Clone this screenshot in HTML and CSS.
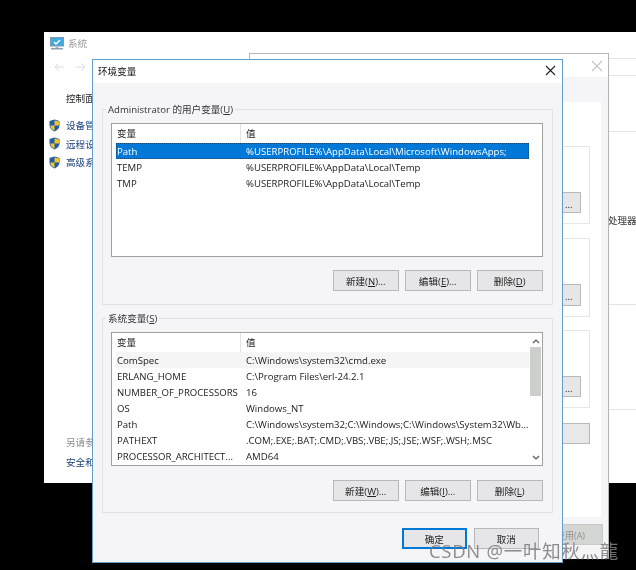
FILE: index.html
```html
<!DOCTYPE html>
<html lang="zh-CN">
<head>
  <meta charset="UTF-8">
  <meta name="viewport" content="width=device-width, initial-scale=1.0">
  <title>环境变量</title>
  <link rel="stylesheet" href="styles.css">
</head>
<body>
  <div class="desktop">

    <!-- 系统 -->
    <div class="win-system">
      <div class="sys-title">
        <svg class="sys-icon" width="14" height="13" viewBox="0 0 14 13">
          <rect x="0.500" y="0.500" width="13" height="8.500" fill="#3fa9e0" stroke="#7d9cb3"/>
          <path d="M4 5l2 2 4-4" fill="none" stroke="#fff" stroke-width="1.500"/>
          <path d="M5.500 9.500h3v1.500h-3z" fill="#a8bac6"/>
          <rect x="1" y="11" width="12" height="1.500" fill="#8aa0b0"/>
        </svg>
        <span>系统</span>
      </div>
      <div class="sys-nav">
        <svg width="10" height="8" viewBox="0 0 10 8"><path d="M10 4H1M4.500 0.500L1 4l3.500 3.500" fill="none" stroke="#dcdcdc"/></svg>
        <svg width="10" height="8" viewBox="0 0 10 8"><path d="M0 4h9M5.500 0.500L9 4 5.500 7.500" fill="none" stroke="#dcdcdc"/></svg>
      </div>
      <div class="sys-side">
        <div class="side-home">控制面</div>
        <ul class="side-list">
          <li><svg class="shield" width="11" height="13" viewBox="0 0 11 13"><path d="M5.500 0.500L10.500 2V6.500C10.500 9.500 8 11.500 5.500 12.500C3 11.500 0.500 9.500 0.500 6.500V2z" fill="#1f5fa8"/><path d="M5.500 1.500V6.500H10V2.500zM5.500 6.500V11.800C3.500 11 1.500 9.300 1.200 6.500z" fill="#f4c430"/></svg>设备管</li>
          <li><svg class="shield" width="11" height="13" viewBox="0 0 11 13"><path d="M5.500 0.500L10.500 2V6.500C10.500 9.500 8 11.500 5.500 12.500C3 11.500 0.500 9.500 0.500 6.500V2z" fill="#1f5fa8"/><path d="M5.500 1.500V6.500H10V2.500zM5.500 6.500V11.800C3.500 11 1.500 9.300 1.200 6.500z" fill="#f4c430"/></svg>远程设</li>
          <li><svg class="shield" width="11" height="13" viewBox="0 0 11 13"><path d="M5.500 0.500L10.500 2V6.500C10.500 9.500 8 11.500 5.500 12.500C3 11.500 0.500 9.500 0.500 6.500V2z" fill="#1f5fa8"/><path d="M5.500 1.500V6.500H10V2.500zM5.500 6.500V11.800C3.500 11 1.500 9.300 1.200 6.500z" fill="#f4c430"/></svg>高级系</li>
        </ul>
        <div class="side-foot">
          <div class="side-see">另请参</div>
          <div class="side-link">安全和</div>
        </div>
      </div>
      <div class="sys-lines">
        <div class="sys-line line-a"></div>
        <div class="sys-line line-b"></div>
        <div class="sys-line line-c"><span class="cpu-label">处理器</span></div>
        <div class="sys-line line-d"></div>
        <div class="sys-line line-e"></div>
      </div>
    </div>

    <!-- 系统属性 -->
    <div class="win-props">
      <div class="props-head">
        <svg width="12" height="12" viewBox="0 0 12 12"><path d="M1 1l10 10M11 1L1 11" stroke="#c4c4c4" stroke-width="1.100"/></svg>
      </div>
      <div class="props-body">
        <div class="props-panel">
          <div class="props-group group-1"><div class="props-btn">...</div></div>
          <div class="props-group group-2"><div class="props-btn">...</div></div>
          <div class="props-group group-3"><div class="props-btn">...</div></div>
          <div class="props-wide"></div>
        </div>
        <div class="props-apply">应用(A)</div>
      </div>
    </div>

    <!-- 环境变量 -->
    <div class="dialog">
      <div class="dialog-title">
        <span>环境变量</span>
        <svg width="11" height="11" viewBox="0 0 11 11"><path d="M1 1l9 9M10 1l-9 9" stroke="#222" stroke-width="1.100"/></svg>
      </div>
      <div class="dialog-body">
        <fieldset class="group group-user">
          <legend>Administrator 的用户变量(<u>U</u>)</legend>
          <div class="list">
            <div class="row head"><span class="c1">变量</span><span class="c2">值</span></div>
            <div class="row selected"><span class="c1">Path</span><span class="c2">%USERPROFILE%\AppData\Local\Microsoft\WindowsApps;</span></div>
            <div class="row"><span class="c1">TEMP</span><span class="c2">%USERPROFILE%\AppData\Local\Temp</span></div>
            <div class="row"><span class="c1">TMP</span><span class="c2">%USERPROFILE%\AppData\Local\Temp</span></div>
          </div>
          <div class="btns">
            <button>新建(<u>N</u>)...</button>
            <button>编辑(<u>E</u>)...</button>
            <button>删除(<u>D</u>)</button>
          </div>
        </fieldset>

        <fieldset class="group group-sys">
          <legend>系统变量(<u>S</u>)</legend>
          <div class="list">
            <div class="row head"><span class="c1">变量</span><span class="c2">值</span></div>
            <div class="row hover"><span class="c1">ComSpec</span><span class="c2">C:\Windows\system32\cmd.exe</span></div>
            <div class="row"><span class="c1">ERLANG_HOME</span><span class="c2">C:\Program Files\erl-24.2.1</span></div>
            <div class="row"><span class="c1">NUMBER_OF_PROCESSORS</span><span class="c2">16</span></div>
            <div class="row"><span class="c1">OS</span><span class="c2">Windows_NT</span></div>
            <div class="row"><span class="c1">Path</span><span class="c2">C:\Windows\system32;C:\Windows;C:\Windows\System32\Wb...</span></div>
            <div class="row"><span class="c1">PATHEXT</span><span class="c2">.COM;.EXE;.BAT;.CMD;.VBS;.VBE;.JS;.JSE;.WSF;.WSH;.MSC</span></div>
            <div class="row"><span class="c1">PROCESSOR_ARCHITECT...</span><span class="c2">AMD64</span></div>
            <div class="scrollbar">
              <svg width="8" height="5" viewBox="0 0 8 5"><path d="M1 4l3-3 3 3" fill="none" stroke="#555" stroke-width="1.200"/></svg>
              <div class="track"><div class="thumb"></div></div>
              <svg width="8" height="5" viewBox="0 0 8 5"><path d="M1 1l3 3 3-3" fill="none" stroke="#555" stroke-width="1.200"/></svg>
            </div>
          </div>
          <div class="btns">
            <button>新建(<u>W</u>)...</button>
            <button>编辑(<u>I</u>)...</button>
            <button>删除(<u>L</u>)</button>
          </div>
        </fieldset>

        <div class="dialog-foot">
          <button class="ok">确定</button>
          <button>取消</button>
        </div>
      </div>
    </div>

    <div class="watermark">CSDN @一叶知秋灬龍</div>
  </div>
</body>
</html>
```
FILE: styles.css
```css
html, body {
  margin: 0;
  padding: 0;
  background: #000;
}
.desktop {
  position: relative;
  width: 636px;
  height: 570px;
  overflow: hidden;
  background: #000;
  font-family: "Open Sans", "Noto Sans CJK SC", sans-serif;
  font-size: 9.6px;
  color: #1a1a1a;
  filter: blur(0.3px);
}

/* back window */
.win-system {
  position: absolute;
  left: 44px;
  top: 32px;
  width: 592px;
  height: 451px;
  background: #fff;
}
.sys-title {
  display: flex;
  align-items: center;
  gap: 4px;
  padding: 4px 0 0 6px;
  color: #9a9a9a;
}
.sys-nav {
  display: flex;
  gap: 12px;
  padding: 13px 0 0 10px;
}
.sys-side {
  padding: 20px 0 0 5px;
  white-space: nowrap;
}
.side-home {
  padding-left: 17px;
  color: #222;
}
.side-list {
  list-style: none;
  margin: 11px 0 0;
  padding: 0;
}
.side-list li {
  display: flex;
  align-items: center;
  gap: 6px;
  height: 18.5px;
  color: #1c3f7a;
}
.shield {
  flex: none;
}
.side-foot {
  margin-top: 263px;
  padding-left: 17px;
}
.side-see {
  color: #8a8a8a;
}
.side-link {
  margin-top: 6px;
  color: #1c3f7a;
}
.sys-lines {
  position: absolute;
  left: 565px;
  top: 0;
  width: 27px;
  height: 100%;
}
.sys-line {
  position: absolute;
  left: 0;
  right: 0;
  border-top: 1px solid #e4e4e4;
}
.line-a { top: 26px; }
.line-b { top: 43px; }
.line-c { top: 99px; }
.line-d { top: 272px; }
.line-e { top: 377px; }
.cpu-label {
  position: absolute;
  left: -1px;
  top: 81px;
  font-size: 9.5px;
  white-space: nowrap;
  color: #333;
}

/* middle window */
.win-props {
  position: absolute;
  left: 249px;
  top: 53px;
  width: 358px;
  height: 505px;
  border: 1px solid #b5b5b5;
  border-bottom: none;
  background: #f5f5f7;
}
.props-head {
  display: flex;
  justify-content: flex-end;
  align-items: center;
  height: 23px;
  padding-right: 5px;
  background: #fff;
}
.props-body {
  padding: 25px 5px 0 0;
}
.props-panel {
  height: 415px;
  margin-right: 2px;
  padding: 44px 11px 0 0;
  background: #fff;
  box-sizing: border-box;
}
.props-group {
  display: flex;
  flex-direction: column;
  justify-content: flex-end;
  align-items: flex-end;
  box-sizing: border-box;
  border: 1px solid #e6e6e6;
  padding: 0 8px 10px 0;
}
.group-1 { height: 78px; }
.group-2 { height: 79px; margin-top: 14px; }
.group-3 { height: 78px; margin-top: 13px; }
.props-btn {
  width: 60px;
  height: 21px;
  line-height: 24px;
  box-sizing: border-box;
  padding-left: 43px;
  border: 1px solid #b8b8b8;
  background: #e6e6e6;
}
.group-2 .props-btn { height: 22px; }
.props-wide {
  width: 340px;
  height: 21px;
  margin-top: 15px;
  box-sizing: border-box;
  border: 1px solid #b8b8b8;
  background: #e8e8e8;
}
.props-apply {
  height: 21px;
  line-height: 21px;
  margin-top: 7px;
  box-sizing: border-box;
  padding-left: 305px;
  border: 1px solid #c8cbc8;
  background: #d4d6d3;
  color: #8f8f8f;
  font-size: 9px;
}

/* dialog */
.dialog {
  position: absolute;
  left: 92px;
  top: 59px;
  width: 471px;
  height: 504px;
  box-sizing: border-box;
  display: flex;
  flex-direction: column;
  border: 1px solid #5f9fc9;
  background: #f5f5f8;
}
.dialog-title {
  display: flex;
  align-items: center;
  justify-content: space-between;
  height: 23px;
  box-sizing: border-box;
  padding: 0 6px 2px 5px;
  background: #fff;
  color: #111;
}
.dialog-body {
  flex: 1;
  padding: 20px 9px 0;
}
fieldset.group {
  margin: 0;
  padding: 0 8px;
  box-sizing: border-box;
  border: 1px solid #e2e2e4;
  min-width: 0;
}
fieldset.group legend {
  margin-left: -5px;
  padding: 0 2px;
  line-height: 13px;
  color: #333;
}
fieldset.group-user { height: 202px; }
fieldset.group-sys {
  height: 201px;
  margin-top: 7px;
}
.list {
  position: relative;
  box-sizing: border-box;
  margin-top: 7px;
  width: 432px;
  height: 134px;
  padding: 0 13px 0 4px;
  border: 1px solid #a0a0a0;
  background: #fff;
}
.row {
  display: flex;
  align-items: center;
  box-sizing: border-box;
  height: 16px;
  padding-top: 1px;
  line-height: 15px;
  white-space: nowrap;
}
.row .c1 {
  width: 129px;
  padding-left: 1px;
  flex: none;
}
.row.head {
  height: 19px;
  padding-top: 0;
  color: #222;
}
.row.head .c1 {
  width: 123px;
}
.row.head .c2 {
  border-left: 1px solid #e4e4e4;
  height: 19px;
  line-height: 19px;
  padding-left: 5px;
}
.row.selected {
  background: #0078d7;
  color: #fff;
  outline: 1px dotted #0a4a80;
  outline-offset: -1px;
}
.row.hover {
  background: #f5f5f5;
}
.scrollbar {
  position: absolute;
  right: 0;
  top: 0;
  bottom: 0;
  width: 13px;
  display: flex;
  flex-direction: column;
  align-items: center;
  justify-content: space-between;
  padding: 6px 0 5px;
  box-sizing: border-box;
}
.track {
  flex: 1;
  width: 100%;
  padding-top: 3px;
}
.thumb {
  width: 11px;
  height: 49px;
  margin-left: 1px;
  background: #cdcfcc;
}
.btns {
  display: flex;
  justify-content: flex-end;
  gap: 6.5px;
  margin-top: 13px;
  padding-right: 1.5px;
}
.group-sys .btns {
  margin-top: 14px;
}
button {
  width: 65.5px;
  height: 21px;
  padding: 0;
  box-sizing: border-box;
  border: 1px solid #b8b8b8;
  background: #e6e6e8;
  font: inherit;
  color: #222;
}
.dialog-foot {
  display: flex;
  justify-content: flex-end;
  gap: 6.5px;
  margin-top: 15px;
  padding-right: 14px;
}
.dialog-foot .ok {
  border: 2px solid #0078d7;
}

.watermark {
  position: absolute;
  left: 429px;
  top: 541px;
  font-size: 18.5px;
  letter-spacing: 0.7px;
  line-height: 20px;
  white-space: nowrap;
  color: rgba(125, 125, 125, 0.88);
}
```
